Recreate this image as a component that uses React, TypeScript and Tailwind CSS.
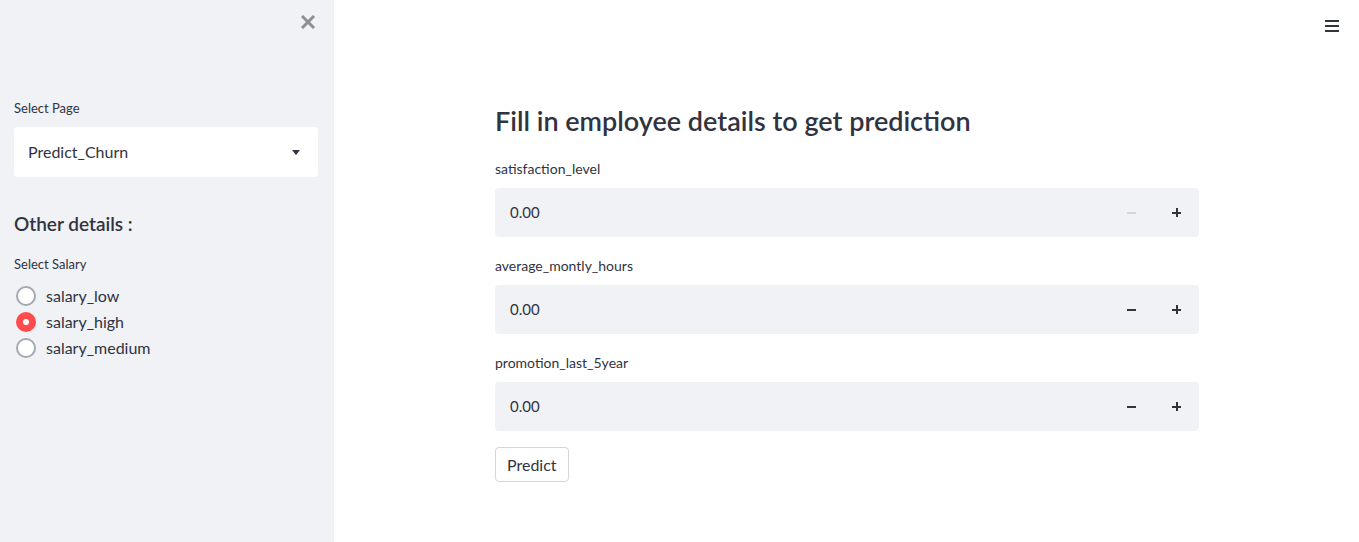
import React from "react";

const font = { fontFamily: '"Source Sans Pro", Lato, "Noto Sans", sans-serif' };

const NumberField: React.FC<{ label: string; minusDisabled?: boolean }> = ({ label, minusDisabled }) => (
  <div className="flex flex-col">
    <label className="text-[14px] leading-[20px] text-[#31333f] mb-[9px]">{label}</label>
    <div className="flex h-[49px] rounded-[4px] bg-[#f0f2f6] items-center">
      <div className="flex-1 pl-[15px] text-[15px] text-[#31333f]">0.00</div>
      <button className="w-[45px] h-full flex items-center justify-center">
        <span className={`block w-[9px] h-[2px] ${minusDisabled ? "bg-[#d3d6dd]" : "bg-[#31333f]"}`} />
      </button>
      <button className="w-[45px] h-full flex items-center justify-center relative">
        <span className="block w-[9px] h-[2px] bg-[#31333f]" />
        <span className="absolute w-[2px] h-[9px] bg-[#31333f]" />
      </button>
    </div>
  </div>
);

const Radio: React.FC<{ label: string; checked?: boolean }> = ({ label, checked }) => (
  <div className="flex items-center h-[26px]">
    <span
      className={`w-[20px] h-[20px] rounded-full flex items-center justify-center ml-[16px] mr-[10px] ${
        checked ? "bg-[#ff4b4b]" : "border-2 border-[#a3a8b4] bg-white"
      }`}
    >
      {checked && <span className="w-[6px] h-[6px] rounded-full bg-white" />}
    </span>
    <span className="text-[16px] text-[#31333f]">{label}</span>
  </div>
);

export default function App() {
  return (
    <div className="flex w-full h-[542px] bg-white overflow-hidden" style={font}>
      <aside className="w-[334px] shrink-0 bg-[#f0f2f6] pl-[14px] pr-[16px] flex flex-col relative">
        <button className="absolute right-[19px] top-[15px] text-[#8d8f96]">
          <svg width="14" height="14" viewBox="0 0 14 14">
            <path d="M2 2L12 12M12 2L2 12" stroke="currentColor" strokeWidth="3" strokeLinecap="square" />
          </svg>
        </button>
        <label className="text-[13px] leading-[18px] text-[#31333f] mt-[99px] mb-[10px]">Select Page</label>
        <div className="h-[50px] bg-white rounded-[4px] flex items-center justify-between pl-[14px] pr-[18px]">
          <span className="text-[16px] text-[#31333f]">Predict_Churn</span>
          <svg width="8" height="5" viewBox="0 0 8 5">
            <path d="M0 0H8L4 5Z" fill="#31333f" />
          </svg>
        </div>
        <h3 className="text-[19px] font-semibold text-[#31333f] mt-[33px] leading-[28px]">Other details :</h3>
        <label className="text-[13px] leading-[18px] text-[#31333f] mt-[17px] mb-[10px]">Select Salary</label>
        <div className="flex flex-col -ml-[14px]">
          <Radio label="salary_low" />
          <Radio label="salary_high" checked />
          <Radio label="salary_medium" />
        </div>
      </aside>
      <main className="flex-1 relative">
        <button className="absolute right-[20px] top-[20px] flex flex-col gap-[3px]">
          <span className="block w-[14px] h-[2px] bg-[#31333f]" />
          <span className="block w-[14px] h-[2px] bg-[#31333f]" />
          <span className="block w-[14px] h-[2px] bg-[#31333f]" />
        </button>
        <div className="w-[704px] ml-[161px] pt-[103px] flex flex-col">
          <h2 className="text-[27px] font-semibold text-[#31333f] leading-[36px] mb-[20px]">
            Fill in employee details to get prediction
          </h2>
          <div className="flex flex-col gap-[19px]">
            <NumberField label="satisfaction_level" minusDisabled />
            <NumberField label="average_montly_hours" />
            <NumberField label="promotion_last_5year" />
          </div>
          <div className="mt-[16px]">
            <button className="h-[35px] px-[11px] border border-[#d6d6d9] rounded-[4px] bg-white text-[16px] text-[#31333f]">
              Predict
            </button>
          </div>
        </div>
      </main>
    </div>
  );
}
